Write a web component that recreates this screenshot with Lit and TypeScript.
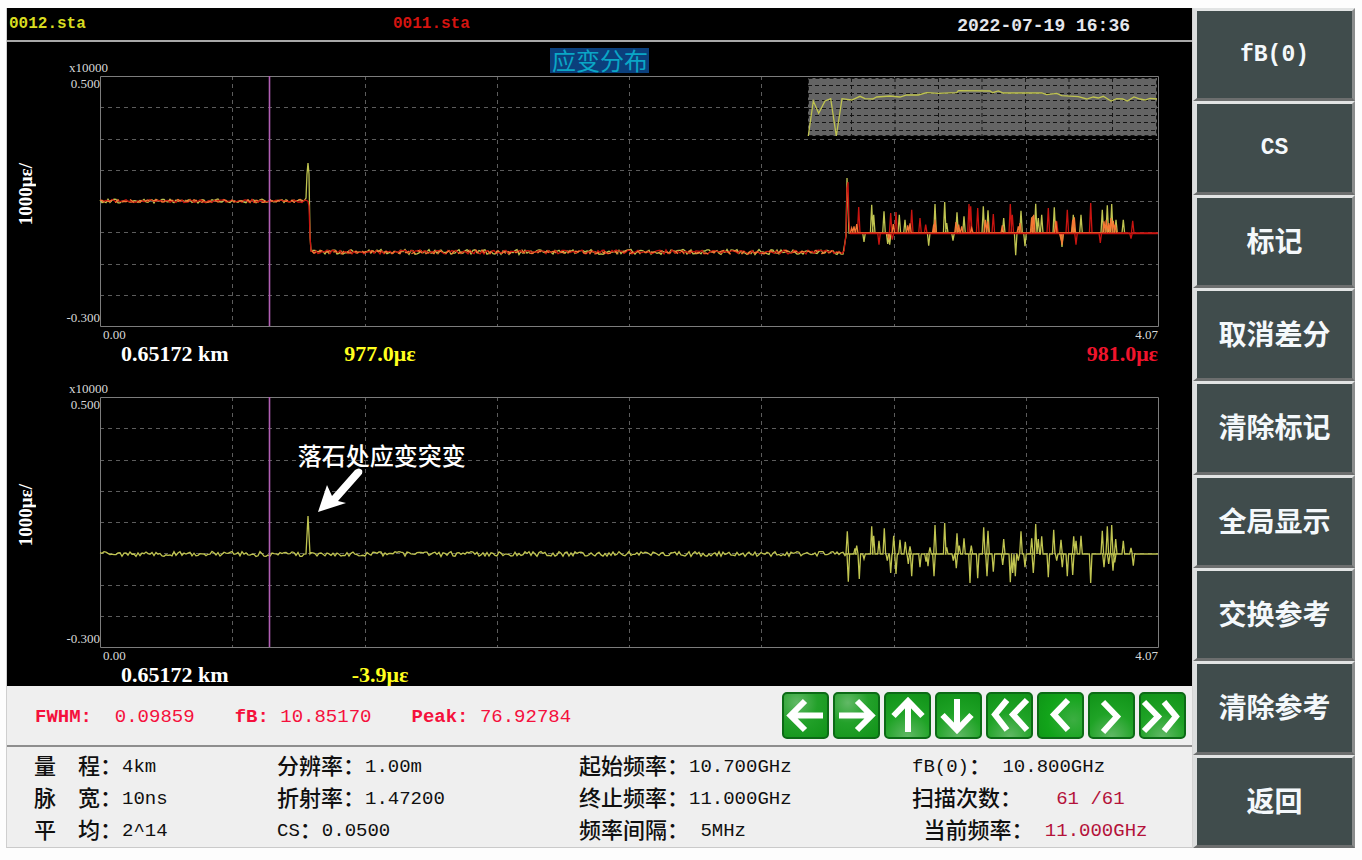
import { LitElement, html, svg, css, nothing } from "lit";
import { customElement, property } from "lit/decorators.js";

type Pt = [number, number];

const W = 1058;
const H = 250;
const BASE = 157;

/* Repeatable noise so that every render gives the same trace. */
function noise(seed: number) {
  let s = seed;
  return () => {
    s = (s * 1664525 + 1013904223) % 4294967296;
    return s / 4294967296 - 0.5;
  };
}

function flat(from: number, to: number, y: number, amp: number, seed: number): Pt[] {
  const rnd = noise(seed);
  const out: Pt[] = [];
  for (let x = from; x <= to; x += 2) out.push([x, y + rnd() * amp]);
  return out;
}

/* Peaks are [position, level] in thirds of a plot unit, counted from x = 730. */
function spikes(list: Pt[], baseIn: number): Pt[] {
  const out: Pt[] = [];
  [...list]
    .sort((a, b) => a[0] - b[0])
    .forEach(([px, py]) => {
      const x = 730 + px / 3;
      out.push([x - 1.3, BASE], [x, BASE + (py - baseIn) / 3], [x + 1.3, BASE]);
    });
  return out;
}

const line = (pts: Pt[]) => pts.map(([x, y]) => `${x.toFixed(1)},${y.toFixed(1)}`).join(" ");

const SHARED: Pt[] = [
  [65, 190], [72, 185], [80, 178], [190, 178], [233, 182], [240, 176], [315, 165], [311, 180],
  [378, 172], [386, 180], [395, 185], [425, 190], [466, 165], [473, 170], [517, 182], [565, 185],
  [570, 175], [605, 158], [611, 150], [677, 168], [692, 220], [696, 240], [728, 165], [733, 158],
  [822, 170], [829, 165], [836, 175], [843, 160], [850, 168], [856, 180], [176, 225],
];
const YELLOW: Pt[] = [
  [125, 120], [131, 150], [162, 140], [208, 150], [225, 165], [315, 118], [344, 112], [350, 175],
  [381, 143], [402, 155], [460, 125], [474, 137], [521, 160], [573, 138], [608, 155], [617, 117],
  [625, 160], [635, 150], [673, 128], [730, 150], [753, 150], [817, 135], [832, 122], [845, 118],
  [858, 165], [880, 165], [102, 232], [173, 238], [179, 240], [296, 243], [369, 228], [557, 272],
  [585, 245], [696, 247],
];
const RED: Pt[] = [
  [86, 127], [182, 145], [198, 142], [245, 135], [270, 160], [287, 180], [417, 118], [422, 125],
  [443, 130], [490, 148], [541, 118], [547, 150], [655, 130], [712, 135], [782, 115], [908, 168],
  [147, 240], [187, 225], [738, 240], [811, 235], [903, 222], [680, 170], [610, 155],
];
const DIFF: Pt[] = [
  [52, 97], [75, 148], [80, 140], [125, 82], [131, 110], [147, 125], [163, 88], [191, 110],
  [210, 122], [226, 128], [240, 142], [300, 145], [315, 78], [344, 72], [350, 145], [381, 103],
  [388, 140], [402, 118], [424, 140], [461, 85], [474, 95], [521, 120], [573, 97], [605, 118],
  [617, 75], [625, 120], [635, 112], [671, 92], [693, 122], [731, 112], [738, 125], [753, 110],
  [817, 95], [832, 82], [845, 78], [857, 120], [880, 125], [903, 147], [55, 248], [88, 240],
  [102, 180], [172, 185], [182, 222], [198, 225], [235, 195], [245, 232], [270, 205], [288, 188],
  [294, 202], [312, 232], [370, 185], [379, 208], [420, 252], [443, 238], [471, 232], [490, 218],
  [518, 198], [541, 250], [548, 222], [556, 232], [565, 185], [585, 205], [610, 222], [655, 235],
  [680, 185], [697, 205], [712, 232], [728, 228], [782, 252], [822, 205], [836, 195], [849, 215],
  [854, 190], [910, 200],
];
const OVERVIEW: Pt[] = [
  [85, 408], [100, 303], [116, 340], [135, 303], [152, 296], [169, 408], [186, 296], [215, 300],
  [240, 289], [255, 296], [278, 297], [290, 291], [330, 288], [360, 291], [380, 285], [415, 285],
  [440, 278], [475, 280], [530, 278], [535, 272], [630, 273], [638, 278], [655, 273], [670, 279],
  [785, 279], [800, 284], [830, 280], [845, 287], [895, 290], [920, 297], [940, 291], [955, 294],
  [970, 289], [993, 303], [1010, 296], [1028, 297], [1042, 303], [1062, 291], [1080, 297],
  [1095, 300], [1110, 295], [1131, 297],
];

const yellowTrace = line([
  ...flat(0, 205, 125, 4, 7), [206, 122], [207, 98], [208, 87], [209, 98], [210, 160],
  ...flat(211, 744, 176, 5, 21), [746, 160], [747, 102], [748, 130], [749, BASE],
  ...spikes(YELLOW, 205),
]);
const redTrace = line([
  ...flat(0, 208, 125, 3, 99), [209, 130], [210, 160], [211, 175],
  ...flat(212, 744, 176, 4, 5), [746, 158], [747, 112], [748, 106], [749, 145], [750, BASE],
  ...spikes(RED, 205), [W, BASE],
]);
const sharedFlat = line(flat(0, 206, 125, 3, 44));
const sharedFlat2 = line(flat(212, 744, 176, 4, 61));
const sharedTrace = line(spikes(SHARED, 205));
const diffTrace = line([
  ...flat(0, 205, BASE, 5, 12), [206, BASE], [207, 138], [208, 119], [209, 138], [210, BASE],
  ...flat(211, 745, BASE, 5, 33), ...spikes(DIFF, 165), [W, BASE],
]);
const overviewTrace = line(OVERVIEW.map(([x, y]) => [680 + x / 3, y / 3 - 76] as Pt));

const steps = [1, 2, 3, 4, 5, 6, 7];

@customElement("strain-chart")
export class StrainChart extends LitElement {
  @property() kind: "compare" | "diff" = "compare";
  @property() heading = "";
  @property() value = "";
  @property() reference = "";
  @property() note = "";

  static styles = css`
    :host { display: block; color: #d8d8d8; font: 13px/16px "Liberation Serif", serif; }
    .head { display: grid; grid-template-columns: 101px 1fr 101px; height: 34px; align-items: end; }
    .scale { text-align: right; }
    .title { justify-self: center; margin: 0 0 3px; background: #0b3f7c; color: #0aa6c6;
      font: 24px/24px "Noto Sans CJK SC", sans-serif; padding: 0 1px 1px 2px; }
    .body { display: grid; grid-template-columns: 93px 1fr 34px; }
    .axis { display: grid; grid-template-columns: 38px 1fr; height: 250px; }
    .unit { writing-mode: vertical-rl; transform: rotate(180deg); justify-self: center; align-self: center;
      padding-top: 14px; color: #fff; font: bold 19px/22px "Liberation Serif", serif; }
    .ticks { display: flex; flex-direction: column; justify-content: space-between; text-align: right; }
    .plot { position: relative; height: 250px; }
    .plot > svg { display: block; width: 100%; height: 250px; overflow: visible; }
    .plot polyline, .plot line, .plot rect { vector-effect: non-scaling-stroke; fill: none; }
    .plot .frame { stroke: #7c7c7c; }
    .plot .grid { stroke: #5c5c5c; stroke-dasharray: 4 4; }
    .plot .cursor { stroke: #b25fb4; stroke-width: 1.6; }
    .plot .panel { fill: #646464; }
    .plot .ink { stroke: #141414; stroke-dasharray: 4 3; }
    .plot .yellow { stroke: #c0c450; stroke-width: 1.3; }
    .plot .deep { stroke: #c81410; stroke-width: 1.3; }
    .plot .both { stroke: #f47834; stroke-width: 1.3; }
    .plot .dots { stroke-dasharray: 5 4; }
    .note { position: absolute; left: 18.7%; top: 40px; color: #fff;
      font: 500 24px/36px "Noto Sans CJK SC", sans-serif; white-space: nowrap; }
    .note svg { position: absolute; left: 19px; top: 30px; width: 46px; height: 46px; }
    .foot { grid-column: 2; height: 37px; }
    .ends { display: flex; justify-content: space-between; padding-left: 3px; line-height: 17px; }
    .read { display: grid; grid-template-columns: 222px 74px 1fr; padding-left: 21px;
      font: bold 22px/22px "Liberation Serif", serif; color: #fff; white-space: nowrap; }
    .now { color: #ffff1e; justify-self: center; }
    .ref { color: #f0142c; justify-self: end; }
  `;

  private traces() {
    if (this.kind === "diff") return svg`<polyline class="yellow" points=${diffTrace} />`;
    return svg`
      <polyline class="yellow" points=${yellowTrace} />
      <polyline class="deep" points=${redTrace} />
      <polyline class="both" points=${sharedTrace} />
      <polyline class="both dots" points=${sharedFlat} />
      <polyline class="both dots" points=${sharedFlat2} />
      <line class="deep" x1="750" x2=${W} y1="157.5" y2="157.5" />
      <rect class="panel" x="708" y="2" width="349" height="58" />
      ${steps.map((i) => svg`
        <line class="ink" x1=${708 + i * 43.5} x2=${708 + i * 43.5} y1="2" y2="60" />
        <line class="ink" x1="708" x2="1057" y1=${Math.round(2 + i * 7.4) + 0.5} y2=${Math.round(2 + i * 7.4) + 0.5} />`)}
      <rect class="ink" x="708.5" y="2.5" width="348" height="57" />
      <polyline class="yellow" points=${overviewTrace} />`;
  }

  render() {
    return html`
      <div class="head">
        <span class="scale">x10000</span>
        ${this.heading ? html`<h1 class="title">${this.heading}</h1>` : nothing}
      </div>
      <div class="body">
        <div class="axis">
          <span class="unit">1000με/</span>
          <div class="ticks"><span>0.500</span><span>-0.300</span></div>
        </div>
        <div class="plot">
          <svg viewBox="0 0 ${W} ${H}" preserveAspectRatio="none" aria-hidden="true">
            ${steps.map((i) => svg`
              <line class="grid" x1=${Math.round(i * 132.25) + 0.5} x2=${Math.round(i * 132.25) + 0.5} y1="0" y2=${H} />
              <line class="grid" x1="0" x2=${W} y1=${Math.round(i * 31.25) + 0.5} y2=${Math.round(i * 31.25) + 0.5} />`)}
            <rect class="frame" x="0.5" y="0.5" width="1058" height="250" />
            ${this.traces()}
            <line class="cursor" x1="169.5" x2="169.5" y1="0" y2=${H} />
          </svg>
          ${this.note
            ? html`<div class="note">${this.note}
                <svg viewBox="0 0 46 46" aria-hidden="true">
                  <path d="M1 45 L10 18 L15 29 L38 3 Q42 0 45 3 Q46 6 44 8 L21 34 L29 36 Z" fill="#fff" />
                </svg></div>`
            : nothing}
        </div>
        <div class="foot">
          <div class="ends"><span>0.00</span><span>4.07</span></div>
          <div class="read">
            <span>0.65172 km</span>
            <span class="now">${this.value}</span>
            <span class="ref">${this.reference}</span>
          </div>
        </div>
      </div>`;
  }
}

const ICONS: { label: string; d: string }[] = [
  { label: "左移", d: "M41 23.5H10M23 9L8.500 23.500L23 38" },
  { label: "右移", d: "M6 23.5H37M24 9L38.500 23.500L24 38" },
  { label: "上移", d: "M24 40V10M9.500 24L24 9L38.500 24" },
  { label: "下移", d: "M22 7V37M7.500 23L22 38L36.500 23" },
  { label: "快速后退", d: "M21 8L9 22.500L21 38M41 8L27 22.500L41 38" },
  { label: "后退", d: "M31 8L17 22.500L31 38" },
  { label: "前进", d: "M15 10L29 24.500L15 40" },
  { label: "快速前进", d: "M5 10L19 24.500L5 39M25 10L37 24.500L25 39" },
];

const MENU = ["fB(0)", "CS", "标记", "取消差分", "清除标记", "全局显示", "交换参考", "清除参考", "返回"];

const PARAMS: { name: string; value: string; live?: boolean }[][] = [
  [
    { name: "量　程：", value: "4km" },
    { name: "脉　宽：", value: "10ns" },
    { name: "平　均：", value: "2^14" },
  ],
  [
    { name: "分辨率：", value: "1.00m" },
    { name: "折射率：", value: "1.47200" },
    { name: "CS：", value: "0.0500" },
  ],
  [
    { name: "起始频率：", value: "10.700GHz" },
    { name: "终止频率：", value: "11.000GHz" },
    { name: "频率间隔：", value: " 5MHz" },
  ],
  [
    { name: "fB(0)：", value: " 10.800GHz" },
    { name: "扫描次数：", value: "   61 /61", live: true },
    { name: " 当前频率：", value: " 11.000GHz", live: true },
  ],
];

/* Latin runs are set in the fixed-pitch face at half the width of a Chinese character. */
const runs = (text: string) =>
  (text.match(/[\x20-\x7e]+|[^\x20-\x7e]+/g) ?? []).map((part) =>
    /^[\x20-\x7e]/.test(part) ? html`<span class="mono">${part}</span>` : part,
  );

@customElement("app-root")
export class AppRoot extends LitElement {
  static styles = css`
    :host { display: block; background: #fdfdfd; }
    .app { display: grid; grid-template-columns: 1fr 162px; padding: 8px 7px 12px 6px; }
    .main { display: flex; flex-direction: column; min-width: 0; background: #efefef;
      border-right: 1px solid #d4d4d4; border-left: 1px solid #cfcfcf; border-bottom: 1px solid #cacaca; }
    .bar { display: grid; grid-template-columns: 384px 1fr auto; align-items: center; height: 32px;
      padding: 0 62px 0 2px; background: #000; border-bottom: 2px solid #a8a8a8;
      font: bold 16px/20px "Liberation Mono", monospace; }
    .cur { color: #d8dc20; }
    .old { color: #d41410; }
    .bar time { color: #e4e6ec; font-size: 18px; padding-top: 3px; }
    .charts { background: #000; overflow: hidden; padding-bottom: 2px; }
    .strip { display: flex; align-items: center; justify-content: space-between; height: 59px;
      padding: 0 6px 0 28px; border-bottom: 2px solid #8e8e8e; }
    .stats { display: flex; gap: 40px; color: #f5103c; white-space: pre; padding-top: 3px;
      font: 19px/24px "Liberation Mono", monospace; }
    .nav { display: flex; gap: 4px; }
    .nav button { width: 47px; height: 47px; padding: 0; border-radius: 5px;
      border: 2px solid #0c6a16; box-sizing: border-box;
      background: radial-gradient(circle at 30% 20%, #62b966 0, #23a12a 45%, #109318 100%); }
    .nav button:nth-child(n + 3) { background: radial-gradient(circle at 50% 100%, #62b966 0, #1fa326 50%, #109318 100%); }
    .nav button:nth-child(6) { background: radial-gradient(circle at 80% 60%, #3cae42 0, #12a41a 60%, #0f9617 100%); }
    .nav svg { display: block; width: 47px; height: 47px; margin: -2px; }
    .nav path { fill: none; stroke: #fff; stroke-width: 6; }
    .params { display: grid; grid-template-columns: 243fr 302fr 333fr 280fr; padding: 1px 0 3px 27px; }
    .params dl { margin: 0; }
    .row { display: flex; white-space: pre; height: 32px; color: #101010;
      font: 500 22px/32px "Noto Sans CJK SC", sans-serif; }
    .row dd { margin: 0; }
    .mono { font-family: "Liberation Mono", monospace; font-size: 19px; line-height: 16px; vertical-align: 2px; }
    .live { color: #b4123a; }
    .menu { display: grid; grid-auto-rows: 1fr; background: #8c8c8c; }
    .menu button { margin: 0; padding: 0 0 3px; border: 3px solid; border-color: #e2e4e4 #8a8c8c #6c6e6e #dcdede;
      border-left-width: 4px; background: #404c4c; color: #f4f8fb;
      font: bold 28px/36px "Noto Sans CJK SC", sans-serif; }
    .menu .mono { font-size: 23px; vertical-align: 4px; }
  `;

  render() {
    return html`
      <div class="app">
        <main class="main">
          <header class="bar">
            <span class="cur">0012.sta</span>
            <span class="old">0011.sta</span>
            <time datetime="2022-07-19T16:36">2022-07-19 16:36</time>
          </header>
          <section class="charts">
            <strain-chart kind="compare" heading="应变分布" value="977.0με" reference="981.0με"></strain-chart>
            <strain-chart kind="diff" value="-3.9με" note="落石处应变突变"></strain-chart>
          </section>
          <div class="strip">
            <div class="stats"><span><b>FWHM:</b>  0.09859</span><span><b>fB:</b> 10.85170</span><span><b>Peak:</b> 76.92784</span></div>
            <div class="nav">
              ${ICONS.map((i) => html`<button type="button" aria-label=${i.label}>
                <svg viewBox="0 0 47 47" aria-hidden="true"><path d=${i.d} /></svg></button>`)}
            </div>
          </div>
          <div class="params">
            ${PARAMS.map((col) => html`<dl>
              ${col.map((p) => html`<div class="row"><dt>${runs(p.name)}</dt><dd class=${p.live ? "live" : ""}>${runs(p.value)}</dd></div>`)}
            </dl>`)}
          </div>
        </main>
        <nav class="menu">
          ${MENU.map((m) => html`<button type="button">${runs(m)}</button>`)}
        </nav>
      </div>`;
  }
}
